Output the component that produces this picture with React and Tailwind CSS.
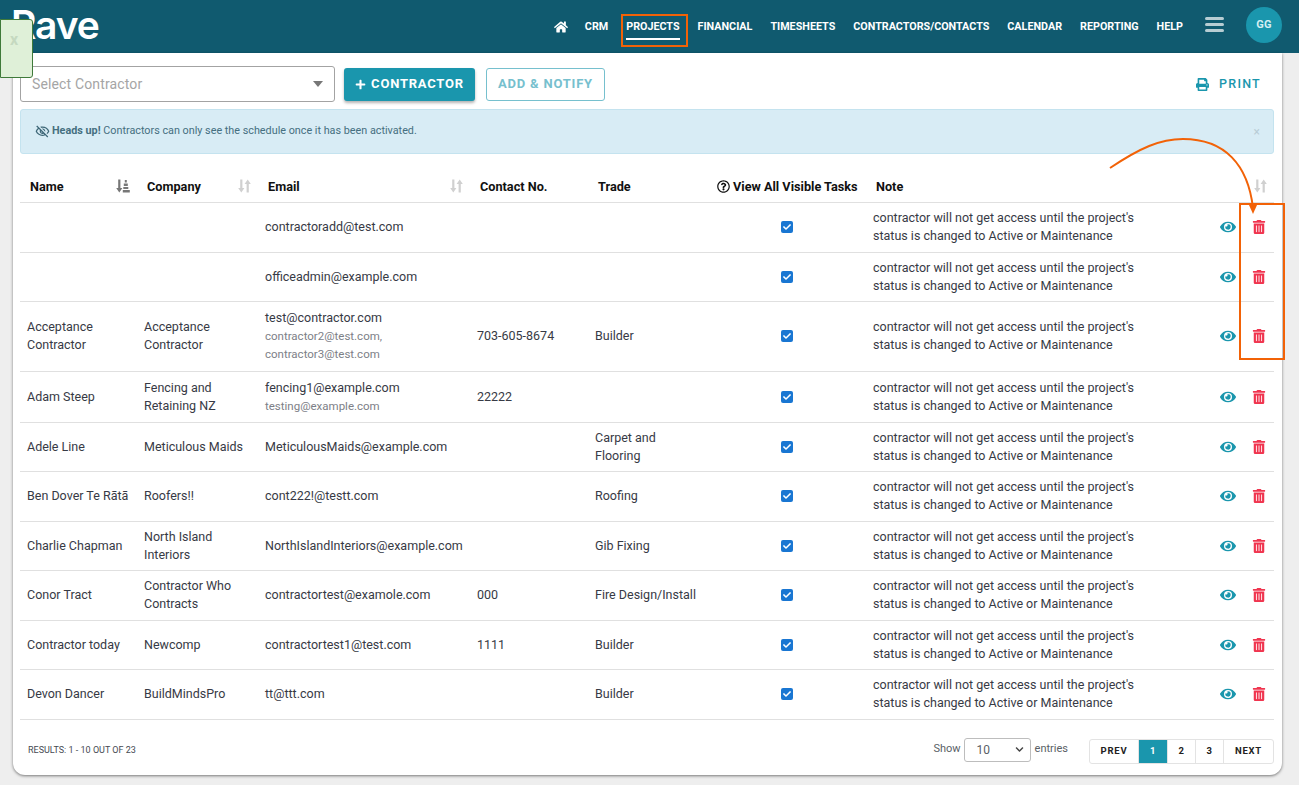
import React from "react";
import { FaHome, FaPrint, FaEye, FaTrashAlt, FaPlus, FaRegQuestionCircle, FaCheck, FaChevronDown } from "react-icons/fa";
import { MdOutlineVisibilityOff } from "react-icons/md";

const NOTE = ["contractor will not get access until the project's", "status is changed to Active or Maintenance"];

const NAV = ["CRM", "PROJECTS", "FINANCIAL", "TIMESHEETS", "CONTRACTORS/CONTACTS", "CALENDAR", "REPORTING", "HELP"];

const ROWS = [
  { name: "", company: "", email: "contractoradd@test.com", h: "h-[50px]" },
  { name: "", company: "", email: "officeadmin@example.com", h: "h-[49px]" },
  {
    name: "Acceptance Contractor",
    company: "Acceptance Contractor",
    email: "test@contractor.com",
    extra: ["contractor2@test.com,", "contractor3@test.com"],
    phone: "703-605-8674",
    trade: "Builder",
    h: "h-[70px]",
  },
  { name: "Adam Steep", company: "Fencing and Retaining NZ", email: "fencing1@example.com", extra: ["testing@example.com"], phone: "22222", h: "h-[51px]" },
  { name: "Adele Line", company: "Meticulous Maids", email: "MeticulousMaids@example.com", trade: "Carpet and\nFlooring", h: "h-[49px]" },
  { name: "Ben Dover Te Rātā", company: "Roofers!!", email: "cont222!@testt.com", trade: "Roofing", h: "h-[50px]" },
  { name: "Charlie Chapman", company: "North Island Interiors", email: "NorthIslandInteriors@example.com", trade: "Gib Fixing", h: "h-[49px]" },
  { name: "Conor Tract", company: "Contractor Who Contracts", email: "contractortest@examole.com", phone: "000", trade: "Fire Design/Install", h: "h-[50px]" },
  { name: "Contractor today", company: "Newcomp", email: "contractortest1@test.com", phone: "1111", trade: "Builder", h: "h-[49px]" },
  { name: "Devon Dancer", company: "BuildMindsPro", email: "tt@ttt.com", trade: "Builder", h: "h-[50px]" },
];

// up + down arrows used on the sortable headers
const SortArrows = () => (
  <svg width="13" height="14" viewBox="0 0 13 14" className="text-[#d0d0d0]" fill="currentColor">
    <path d="M2.2 0.5h2.2v8.5h2L3.3 13.5 0.2 9h2z" />
    <path d="M8.6 13.500h2.2V5h2L9.7 0.5 6.6 5h2z" />
  </svg>
);

// the sorted column: down arrow next to bars that widen downward
const SortActive = () => (
  <svg width="14" height="14" viewBox="0 0 14 14" className="text-[#777]" fill="currentColor">
    <path d="M2.200 0.5h2.200v8.500h2L3.300 13.500 0.200 9h2z" />
    <path d="M8.800 1h2v2.500h-2zM7.800 4.500h4v2.500h-4zM7.300 8h5v2h-5zM6.800 11h7v2.500h-7z" />
  </svg>
);

const HeadCell = ({ children, sort, active, className = "" }) => (
  <th className={`p-0 text-left text-[12.7px] font-bold text-[#111] ${className}`}>
    <div className="flex items-center justify-between pl-[10px] pr-[7px]">
      <span>{children}</span>
      {active && <SortActive />}
      {sort && <SortArrows />}
    </div>
  </th>
);

const Row = ({ row }) => (
  <tr className={`${row.h} border-b border-[#e0e0e0] text-[12.5px] leading-[18px] text-[#373a45]`}>
    <td className="pl-[7px] pr-2 align-middle">{row.name}</td>
    <td className="pl-[7px] pr-2 align-middle">{row.company}</td>
    <td className="pl-[7px] align-middle">
      <div>{row.email}</div>
      {row.extra?.map((e) => (
        <div key={e} className="text-[11.5px] text-[#7d8087]">{e}</div>
      ))}
    </td>
    <td className="pl-[7px] align-middle">{row.phone}</td>
    <td className="whitespace-pre-line pl-[7px] align-middle">{row.trade}</td>
    <td className="pl-[3px] align-middle">
      <span className="mx-auto flex h-[12px] w-[12px] items-center justify-center rounded-[2px] bg-[#1976d2] text-white">
        <FaCheck className="text-[8px]" />
      </span>
    </td>
    <td className="whitespace-nowrap pl-[7px] align-middle">
      <div>{NOTE[0]}</div>
      <div>{NOTE[1]}</div>
    </td>
    <td className="align-middle">
      <div className="flex items-center justify-end pr-[8px]">
        <FaEye className="text-[16px] text-[#1a96ad]" />
        <FaTrashAlt className="ml-[16px] text-[14px] text-[#f0354f]" />
      </div>
    </td>
  </tr>
);

const PageButton = ({ children, active, className = "" }) => (
  <span
    className={`flex h-[23px] items-center justify-center border-r border-[#e3e3e3] text-[9.5px] font-bold tracking-[0.08em] last:border-r-0 ${
      active ? "bg-[#1a96ad] text-white" : "text-[#222]"
    } ${className}`}
  >
    {children}
  </span>
);

export default function App() {
  return (
    <div className="relative h-[785px] overflow-hidden bg-[#eeeeee] font-['Roboto',sans-serif]">
      {/* top nav */}
      <header className="flex h-[53px] items-center justify-between overflow-hidden bg-[#105a6f] pl-[11px] pr-[17px]">
        <span className="mt-[-5px] font-['Inter',sans-serif] text-[39px] font-semibold leading-none tracking-[-0.03em] text-white">Rave</span>
        <nav className="flex items-center">
          <FaHome className="mr-[17px] text-[14px] text-white" />
          <div className="flex items-center gap-[18px] text-[10.75px] font-bold text-white">
            {NAV.map((n) => (
              <span key={n} className={`pt-[1px] ${n === "PROJECTS" ? "mt-[5px] border-b-2 border-white pb-[3px]" : ""}`}>{n}</span>
            ))}
          </div>
          <div className="ml-[22px] mt-[-4px] flex w-[19px] flex-col gap-[3px]">
            <span className="h-[3px] rounded-sm bg-[#b7cdd3]" />
            <span className="h-[3px] rounded-sm bg-[#b7cdd3]" />
            <span className="h-[3px] rounded-sm bg-[#b7cdd3]" />
          </div>
          <span className="ml-[22px] mt-[-3px] flex h-[36px] w-[36px] items-center justify-center rounded-full bg-[#1a96ad] text-[11px] font-bold tracking-wide text-[#d5eef3]">GG</span>
        </nav>
      </header>

      {/* card */}
      <main className="mx-[13px] flex h-[722px] w-[1269px] flex-col rounded-b-xl bg-white pl-[7px] pr-[8px] shadow-[0_1px_3px_rgba(0,0,0,0.5)]">
        <div className="flex shrink-0 items-center pb-[7px] pt-[13px]">
          <div className="flex h-[36px] w-[315px] items-center justify-between rounded-[3px] border border-[#a3a3a3] px-[11px] text-[14px] tracking-[0.01em] text-[#a5a5a5]">
            <span>Select Contractor</span>
            <span className="h-0 w-0 border-x-[5.5px] border-t-[6px] border-x-transparent border-t-[#777]" />
          </div>
          <button className="ml-[9px] flex h-[33px] w-[131px] items-center justify-center gap-[5px] rounded-[3px] bg-[#1a96ad] text-[13px] font-bold tracking-[0.06em] text-white shadow-[0_2px_3px_rgba(0,0,0,0.3)]">
            <FaPlus className="text-[11px]" />
            CONTRACTOR
          </button>
          <button className="ml-[11px] flex h-[33px] w-[119px] items-center justify-center rounded-[3px] border border-[#76c0ce] text-[13px] font-bold tracking-[0.06em] text-[#76c0ce]">
            ADD &amp; NOTIFY
          </button>
          <div className="ml-auto flex items-center gap-[10px] pr-[13px] text-[12.5px] font-medium tracking-[0.1em] text-[#1a96ad]">
            <FaPrint className="text-[13px]" />
            PRINT
          </div>
        </div>

        <div className="flex h-[45px] shrink-0 items-center justify-between rounded-[3px] border border-[#c4e3ef] bg-[#d8ecf5] pl-[14px] pr-[13px] text-[10.8px] text-[#456f80]">
          <div className="flex items-center gap-[2px]">
            <MdOutlineVisibilityOff className="text-[15px] text-[#3d6676]" />
            <span><b className="font-bold">Heads up!</b> Contractors can only see the schedule once it has been activated.</span>
          </div>
          <span className="text-[12px] text-[#b9cdd6]">×</span>
        </div>

        <table className="mt-[17px] w-[1254px] shrink-0 table-fixed border-collapse">
          <colgroup>
            <col className="w-[117px]" />
            <col className="w-[121px]" />
            <col className="w-[212px]" />
            <col className="w-[118px]" />
            <col className="w-[117px]" />
            <col className="w-[161px]" />
            <col className="w-[277px]" />
            <col className="w-[131px]" />
          </colgroup>
          <thead>
            <tr className="h-[31px] border-b border-[#e0e0e0]">
              <HeadCell active>Name</HeadCell>
              <HeadCell sort>Company</HeadCell>
              <HeadCell sort>Email</HeadCell>
              <HeadCell>Contact No.</HeadCell>
              <HeadCell>Trade</HeadCell>
              <th className="p-0 pl-[12px] text-left text-[12.7px] font-bold text-[#111]">
                <span className="flex items-center gap-[3px] whitespace-nowrap">
                  <FaRegQuestionCircle className="text-[13px]" />
                  View All Visible Tasks
                </span>
              </th>
              <HeadCell>Note</HeadCell>
              <th className="p-0">
                <div className="flex justify-end pr-[7px]"><SortArrows /></div>
              </th>
            </tr>
          </thead>
          <tbody>
            {ROWS.map((r) => (
              <Row key={r.email} row={r} />
            ))}
          </tbody>
        </table>

        <div className="mt-[19px] flex shrink-0 items-center justify-between">
          <span className="pl-[8px] text-[9px] text-[#454a52]">RESULTS: 1 - 10 OUT OF 23</span>
          <div className="flex items-center">
            <span className="mt-[-3px] text-[11px] text-[#5a5f66]">Show</span>
            <div className="ml-[3px] mt-[-3px] flex h-[24px] w-[67px] items-center justify-between rounded-[3px] border border-[#bdbdbd] pl-[12px] pr-[6px] text-[12px] text-[#5a5f66]">
              10
              <FaChevronDown className="text-[9px] text-[#444]" />
            </div>
            <span className="ml-[4px] mt-[-3px] text-[11px] text-[#5a5f66]">entries</span>
            <div className="ml-[21px] flex overflow-hidden rounded-[3px] border border-[#e3e3e3]">
              <PageButton className="w-[49px]">PREV</PageButton>
              <PageButton active className="w-[29px]">1</PageButton>
              <PageButton className="w-[28px]">2</PageButton>
              <PageButton className="w-[28px]">3</PageButton>
              <PageButton className="w-[49px]">NEXT</PageButton>
            </div>
          </div>
        </div>
      </main>

      {/* green toast poking in from the left edge */}
      <div className="absolute left-0 top-[19px] h-[59px] w-[33px] rounded-r-[3px] border border-[#3f7a3a] bg-[#dff0d8] pl-[9px] pt-[10px] text-[16px] font-bold leading-[20px] text-[#c5d9c0]">
        x
      </div>

      {/* orange annotations on top of the screenshot */}
      <div className="absolute left-[621px] top-[14px] h-[33px] w-[67px] border-2 border-[#f26207]" />
      <div className="absolute left-[1239px] top-[203px] h-[157px] w-[46px] border-2 border-[#f26207]" />
      <svg className="absolute left-[1100px] top-[130px]" width="180" height="100" viewBox="0 0 180 100" fill="none">
        <path d="M10 38C40 18 60 9 83 9C125 9 148 35 153 78" stroke="#f26207" strokeWidth="2" />
        <path d="M149 75L157 75L153 84z" fill="#f26207" />
      </svg>
    </div>
  );
}
